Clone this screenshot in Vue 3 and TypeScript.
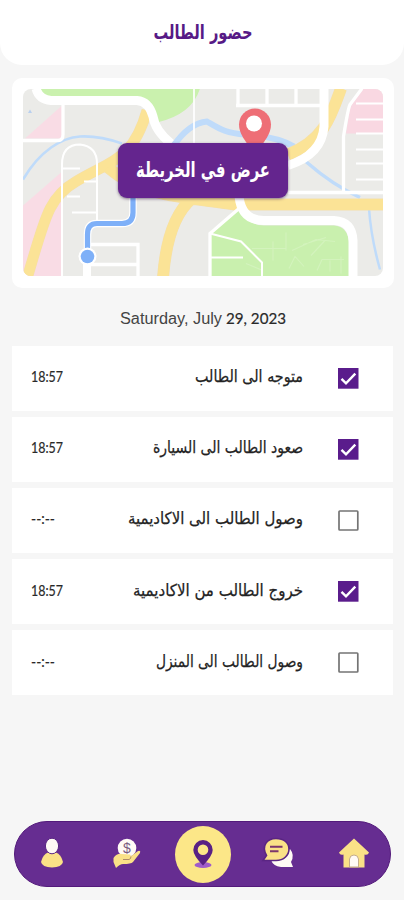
<script setup lang="ts">
interface Step {
  label: string
  time: string
  done: boolean
  width: number
}

const steps: Step[] = [
  { label: 'متوجه الى الطالب', time: '18:57', done: true, width: 108 },
  { label: 'صعود الطالب الى السيارة', time: '18:57', done: true, width: 150 },
  { label: 'وصول الطالب الى الاكاديمية', time: '--:--', done: false, width: 175 },
  { label: 'خروج الطالب من الاكاديمية', time: '18:57', done: true, width: 170 },
  { label: 'وصول الطالب الى المنزل', time: '--:--', done: false, width: 147 },
]
</script>

<template>
  <div class="screen">
    <header class="header">
      <svg class="title" width="110" height="40" viewBox="0 0 110 40">
        <text x="55" y="26" text-anchor="middle" textLength="99" lengthAdjust="spacingAndGlyphs">حضور الطالب</text>
      </svg>
    </header>

    <section class="map-card">
      <svg class="map" viewBox="23 88.5 360 187" preserveAspectRatio="none">
        <rect x="23" y="88" width="360" height="188" fill="#ebebe8" />
        <path d="M25 138 L62 105 V138Z M23 205 L61 172 V276 H23Z" fill="#f9dce5" />
        <path d="M360 88 H383 V133 H346 L350 108Z" fill="#f9d8e2" />
        <path d="M38 88 H200 Q192 114 157 122 L151 108 Q145 99 133 98 H50Z" fill="#caf1ae" />
        <path d="M210 231 L239 208 Q248 225 264 225 H335 Q348 227 349 242 V276 H210Z" fill="#c9f0ae" />
        <g fill="none" stroke="#d3f3bd" stroke-width="1.1">
          <path d="M252 248 H286 M273 241 V260 M286 232 V250 M246 263 L263 270 M292 250 L316 239 L335 241 M303 244 L326 237 M311 255 L325 240 M289 268 L295 256 L304 266 M317 270 L322 259 H344 M330 271 V260 M341 273 V256" />
        </g>
        <g fill="none" stroke="#bfdbfa">
          <path d="M23 179 C40 150 62 137 80 136 Q99 135 122 143" stroke-width="2.600" />
          <path d="M173 146 C184 130 195 122 207 121 C219 128 226 133 245 134 Q277 136 294 146" stroke-width="6" />
          <path d="M294 146 L307 162 Q332 184 360 197" stroke-width="3.500" />
          <path d="M369 208 Q371 237 380 269" stroke-width="2.500" />
        </g>
        <g fill="none">
          <path d="M27 278 C45 218 48 197 76 181 C111 160 133 160 147 110" stroke="#f5dfa8" stroke-width="11" />
          <path d="M108 167 C142 197 190 197 235 204 H384 M163 278 Q167 219 192 198 M341 88 C331 116 324 140 288 154" stroke="#f5dfa8" stroke-width="12" />
          <path d="M27 278 C45 218 48 197 76 181 C111 160 133 160 147 110" stroke="#fbe396" stroke-width="10" />
          <path d="M108 167 C142 197 190 197 235 204 H384 M163 278 Q167 219 192 198 M341 88 C331 116 324 140 288 154" stroke="#fbe396" stroke-width="11" />
        </g>
        <g fill="none" stroke="#fff">
          <path d="M36 88 Q39 99 51 100 H137 Q149 101 153 116 Q155 130 171 143" stroke-width="9" />
          <path d="M324 88 V126 Q322 154 288 165" stroke-width="9" />
          <path d="M239 195 Q241 220 264 220 H334 Q352 221 353 240 V276" stroke-width="9" />
          <path d="M23 140 H58 Q63 140 63 134 V103" stroke-width="3.3" />
          <path d="M62 276 V164 Q62 144 80 144 Q97 146 97 163 V222 M62 168 H80 M84 181 H97 M67 196 H80 M72 212 H97" stroke-width="2" />
          <path d="M90 244 H138 V276 M90 264 H138" stroke-width="3.3" />
          <path d="M87 260 V276" stroke-width="8" />
          <path d="M238 88 V105 M267 88 V105 M296 88 V105 M236 105 H320" stroke-width="3.3" />
          <path d="M194 88 V143" stroke-width="1.7" />
          <path d="M362 88 L350 104 Q348 108 343.500 136 V192 M288 192 H383" stroke-width="3.3" />
          <path d="M356 103 H383 M356 119 H383 M356 133 H383 M356 149 H383 M356 163 H383 M356 179 H383" stroke-width="2" />
          <path d="M239 208 L210 233 V276" stroke-width="3.3" />
          <path d="M210 233 L241 241 L262 262 V276 M210 257 H243" stroke-width="2" />
        </g>
        <path d="M30 109 l2 3.500 h-4z" fill="#b9d0ef" />
        <path d="M133 195 V212 Q133 223 122 223 H97 Q87.500 223 87.500 234 V248" fill="none" stroke="#fff" stroke-width="7.500" />
        <path d="M133 195 V212 Q133 223 122 223 H97 Q87.500 223 87.500 234 V248" fill="none" stroke="#7eb0f8" stroke-width="5.200" />
        <circle cx="87.500" cy="256" r="9" fill="#fff" />
        <circle cx="87.500" cy="256" r="6.800" fill="#7eb0f8" />
        <path d="M255 155 L243 137 Q239 130 239 124 A16 16 0 0 1 271 124 Q271 130 267 137Z" fill="#ee6e76" />
        <circle cx="254" cy="123" r="8" fill="#fff" />
      </svg>
      <button class="map-button" type="button">
        <svg width="140" height="40" viewBox="0 0 140 40">
          <text x="70" y="26" text-anchor="middle" textLength="134" lengthAdjust="spacingAndGlyphs">عرض في الخريطة</text>
        </svg>
      </button>
    </section>

    <p class="date">
      <svg width="170" height="24" viewBox="0 0 170 24">
        <text x="2" y="17" textLength="102" lengthAdjust="spacingAndGlyphs">Saturday, July</text>
        <text class="digits" x="108" y="17" textLength="60" lengthAdjust="spacingAndGlyphs">29, 2023</text>
      </svg>
    </p>

    <main class="steps">
      <div v-for="step in steps" :key="step.label" class="step">
        <svg class="time" width="40" height="24" viewBox="0 0 40 24">
          <text x="0" y="17" :textLength="step.done ? 32 : 24" lengthAdjust="spacingAndGlyphs">{{ step.time }}</text>
        </svg>
        <svg class="label" width="180" height="32" viewBox="0 0 180 32">
          <text :x="180 - step.width / 2" y="20" text-anchor="middle" :textLength="step.width" lengthAdjust="spacingAndGlyphs">{{ step.label }}</text>
        </svg>
        <svg class="check" width="21" height="21" viewBox="0 0 21 21">
          <template v-if="step.done">
            <rect width="20.500" height="20.700" fill="#5a1c8c" />
            <path d="M3.500 10.800 L8 15.300 L17.300 5.700" fill="none" stroke="#fff" stroke-width="2.400" />
          </template>
          <rect v-else x="1" y="1" width="18.800" height="19" rx="0.800" fill="#fff" stroke="#747474" stroke-width="1.700" />
        </svg>
      </div>
    </main>

    <nav class="nav">
      <button type="button" class="item">
        <svg width="32" height="34" viewBox="0 0 32 34">
          <path d="M5 25 Q7 17 12 15.500 H20 Q25 17 27 25 Q26 30 16 30.500 Q6 30 5 25Z" fill="#fae187" />
          <ellipse cx="16" cy="9" rx="6.600" ry="7.800" fill="#fffaf5" stroke="#5a2583" stroke-width="1" />
        </svg>
      </button>
      <button type="button" class="item">
        <svg width="32" height="34" viewBox="0 0 32 34">
          <circle cx="16" cy="11" r="9.300" fill="#fffaf5" />
          <text class="coin" x="16" y="15.500" text-anchor="middle">$</text>
          <path d="M2.500 21 Q6 16 11 17 L19 17.500 Q21 19.500 18 20.800 L27 14 Q30 13 29 16 L22 25 Q20 27 12 27 Q9 27 5 31 L2.500 25Z" fill="#fae187" />
          <path d="M12 22.500 H18 Q20 22 20 19.500" fill="none" stroke="#b08a68" stroke-width="1" />
        </svg>
      </button>
      <button type="button" class="item active">
        <svg width="32" height="34" viewBox="0 0 32 34">
          <ellipse cx="16" cy="28" rx="8.500" ry="3" fill="#a05cc9" />
          <path fill-rule="evenodd" d="M16 28.500 Q6.300 18.500 6.300 13 A9.700 10 0 0 1 25.700 13 Q25.700 18.500 16 28.500Z M16 7.500 A5.300 5.300 0 1 0 16 18.100 A5.300 5.300 0 1 0 16 7.500Z" fill="#592184" />
        </svg>
      </button>
      <button type="button" class="item">
        <svg width="32" height="34" viewBox="0 0 32 34">
          <path d="M28 12 Q33 18 29 25 L31 30 H19 Q11 29 9 23 Z" fill="#fffaf5" />
          <path d="M14 1.500 C22 1.500 27 6 27 12 C27 18 22 23.500 14 23.500 H1 L4.500 18.500 C-1 9 5 1.500 14 1.500Z" fill="#fae187" stroke="#5a2583" stroke-width="1.600" />
          <path d="M8 9.800 H20.500 M8 14.200 H16.500" stroke="#7b356c" stroke-width="2" />
        </svg>
      </button>
      <button type="button" class="item">
        <svg width="32" height="34" viewBox="0 0 32 34">
          <path d="M16 1.500 L31 15.500 Q30 18.500 26.500 17.500 V30.500 H5.500 V17.500 Q2 18.500 1 15.500Z" fill="#fae187" />
          <path d="M11.500 30 V22 Q12 18 16 18 Q20 18 20.500 22 V30Z" fill="#fffaf5" stroke="#c5ad8a" stroke-width="1" />
        </svg>
      </button>
    </nav>
  </div>
</template>

<style>
body {
  background: #f6f6f6;
}
</style>

<style scoped>
.screen {
  box-sizing: border-box;
  width: 404px;
  height: 900px;
  display: flex;
  flex-direction: column;
  background: #f6f6f6;
  font-family: 'DejaVu Sans', sans-serif;
  overflow: hidden;
}
svg {
  display: block;
  flex: none;
  overflow: visible;
}
button {
  padding: 0;
  border: 0;
  font: inherit;
}
.header {
  flex: none;
  display: flex;
  justify-content: center;
  height: 52px;
  padding-top: 13px;
  border-radius: 0 0 22px 22px;
  background: #fff;
}
.title {
  margin-left: 2px;
  fill: #571a86;
  font-size: 20px;
  font-weight: 700;
}
.map-card {
  flex: none;
  display: grid;
  place-items: center;
  box-sizing: border-box;
  width: 382px;
  height: 210px;
  margin: 13px 0 0 12px;
  border-radius: 10px;
  background: #fff;
}
.map {
  grid-area: 1 / 1;
  width: 360px;
  height: 187px;
  margin-bottom: 2px;
  border-radius: 8px;
  overflow: hidden;
}
.map-button {
  grid-area: 1 / 1;
  z-index: 1;
  display: flex;
  align-items: center;
  justify-content: center;
  width: 170px;
  height: 55px;
  margin-bottom: 25px;
  border-radius: 9px;
  background: #64258e;
  box-shadow: 0 1px 3px rgba(50, 20, 70, 0.55);
  fill: #fff;
  font-size: 21px;
  font-weight: 700;
}
.date {
  flex: none;
  display: flex;
  justify-content: center;
  margin: 19px 0 14.5px 2px;
  font-family: 'Liberation Sans', sans-serif;
  font-size: 16px;
  fill: #444;
}
.digits {
  font-family: Lato, sans-serif;
  fill: #292929;
  stroke: #292929;
  stroke-width: 0.2px;
}
.steps {
  flex: none;
  display: flex;
  flex-direction: column;
  gap: 6.2px;
  margin-left: 12px;
  width: 381px;
}
.step {
  display: flex;
  align-items: center;
  box-sizing: border-box;
  height: 65px;
  padding: 0 34px 0 19px;
  background: #fff;
}
.time {
  font-family: Lato, sans-serif;
  font-size: 15px;
  fill: #292929;
  stroke: #292929;
  stroke-width: 0.2px;
  padding-bottom: 2px;
}
.label {
  margin-left: auto;
  font-size: 16.5px;
  fill: #222;
  stroke: #222;
  stroke-width: 0.25px;
}
.check {
  margin-left: 35px;
}
.nav {
  flex: none;
  display: flex;
  align-items: center;
  justify-content: space-between;
  box-sizing: border-box;
  width: 377px;
  height: 66px;
  margin: auto 0 13px 14px;
  padding: 0 8.5px;
  border: 1px solid #531a7b;
  border-radius: 33px;
  background: #662d91;
}
.item {
  display: flex;
  align-items: center;
  justify-content: center;
  width: 56px;
  height: 57px;
  border-radius: 50%;
  background: transparent;
}
.item.active {
  background: #fce788;
}
.coin {
  font: 400 14px 'Liberation Sans', sans-serif;
  fill: #7a5c80;
}
</style>
